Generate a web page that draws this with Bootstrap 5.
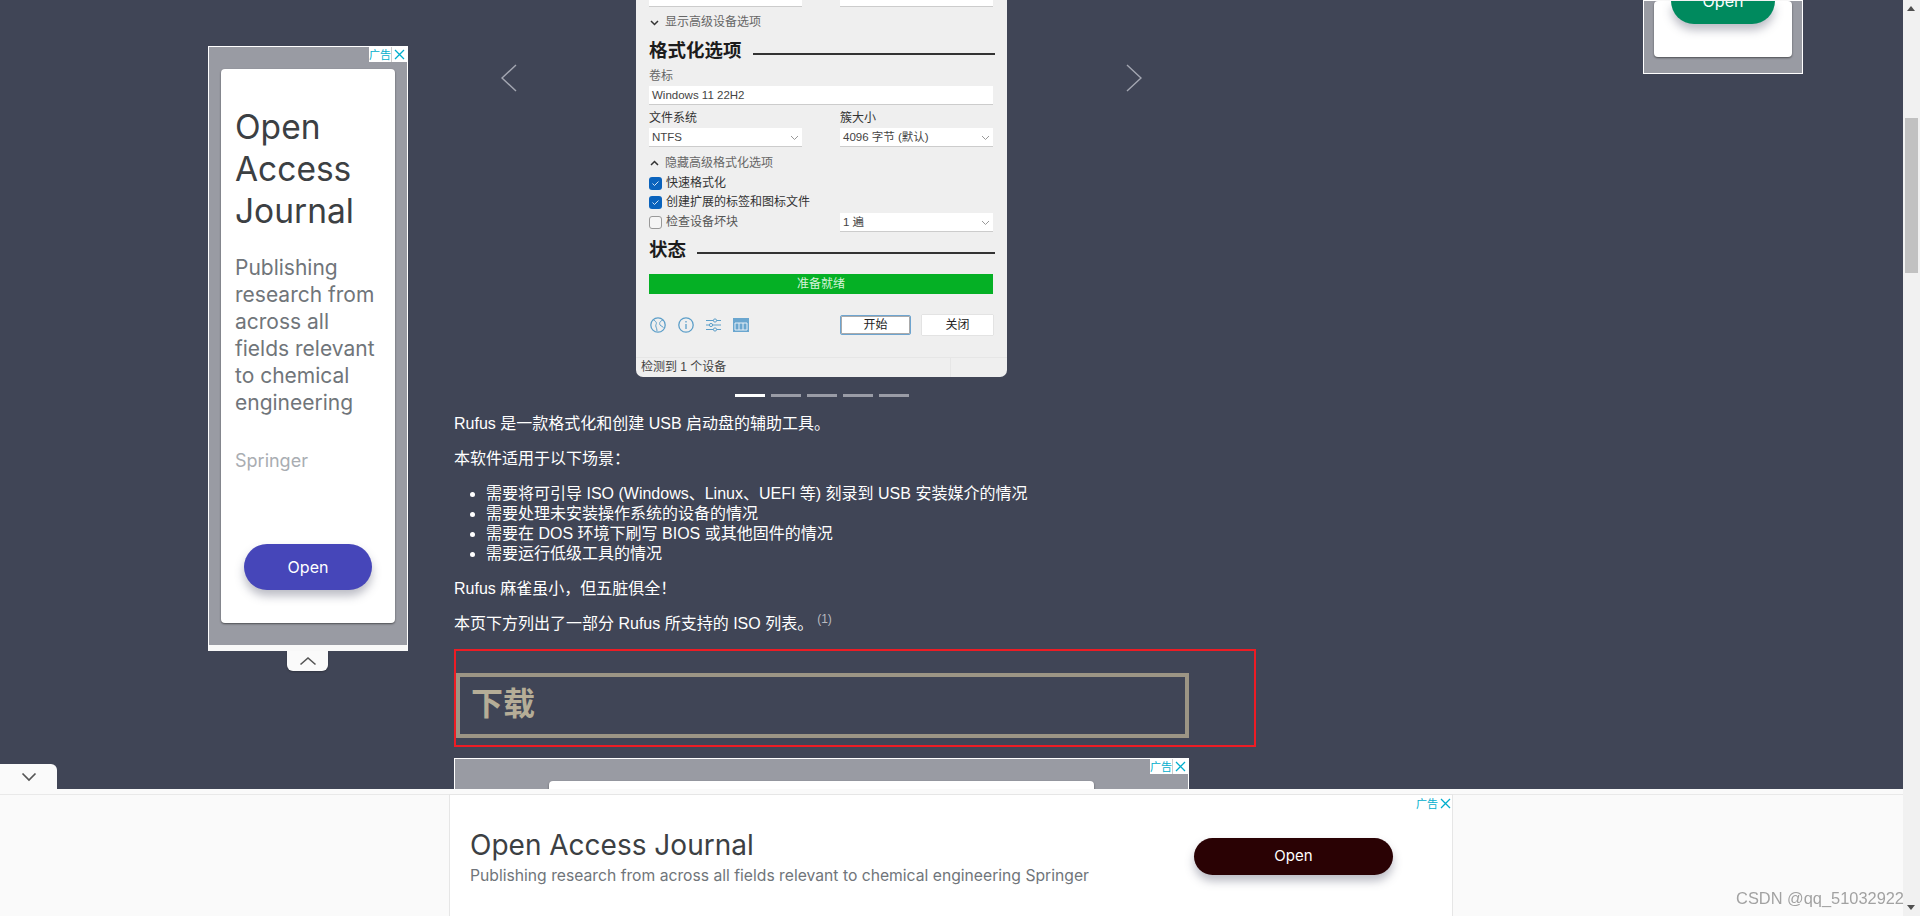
<!DOCTYPE html>
<html lang="en">
<head>
    <meta charset="UTF-8">
    <meta name="viewport" content="width=device-width, initial-scale=1.0">
    <title>Rufus</title>
    <link href="https://cdn.jsdelivr.net/npm/bootstrap@5.3.0/dist/css/bootstrap.min.css" rel="stylesheet">
    <style>
        html, body { height: 916px; overflow: hidden; }
        body {
            background: #404556;
            color: #fff;
            font-family: "Liberation Sans", "Noto Sans CJK SC", sans-serif;
            font-size: 16px;
        }
        .page-area { width: 1903px; height: 916px; overflow: hidden; background: #404556; }

        /* fake browser scrollbar */
        .fake-scroll { width: 17px; height: 916px; background: #f1f1f1; position: relative; }
        .fake-scroll .thumb { position: absolute; left: 2px; right: 2px; top: 118px; height: 155px; background: #c1c1c1; }
        .fake-scroll .up, .fake-scroll .down { position: absolute; left: 4px; width: 0; height: 0; border-left: 4px solid transparent; border-right: 4px solid transparent; }
        .fake-scroll .up { top: 6px; border-bottom: 5px solid #505050; }
        .fake-scroll .down { bottom: 6px; border-top: 5px solid #505050; }

        /* ads */
        .ad-font { font-family: Inter, "Liberation Sans", sans-serif; }
        .ad-frame { background: #999ba3; border: 1px solid #fff; position: relative; }
        .ad-tag { position: absolute; top: 0; right: 0; display: flex; background: #fff; color: #00aecd; height: 15px; font-size: 11px; line-height: 15px; font-family: "Noto Sans CJK SC", sans-serif; }
        .ad-tag span { border-right: 1px solid #ccc; }
        .ad-tag svg { width: 15px; height: 15px; }
        .ad-card { background: #fff; border-radius: 4px; box-shadow: 0 1px 2px rgba(0,0,0,.5); }
        .ad-btn { border-radius: 24px; color: #fff; display: flex; align-items: center; justify-content: center; font-size: 16px; box-shadow: 0 6px 10px rgba(60,64,90,.35); }

        .left-col { width: 454px; padding: 46px 0 0 208px; flex: none; }
        .left-ad { width: 200px; height: 605px; border-bottom: 6px solid #f8f8f8; padding: 22px 12px 21px; }
        .left-ad .ad-card { height: 554px; padding: 37px 10px 0 14px; color: #3c3c3c; }
        .left-ad h4 { font-size: 33.500px; line-height: 42px; font-weight: 400; margin: 0 0 22px; color: #3c4043; }
        .left-ad .ad-desc { font-size: 21px; line-height: 27px; color: #70757a; }
        .left-ad .ad-src { font-size: 18px; color: #a9adb2; margin-top: 31px; }
        .left-ad .ad-btn { width: 128px; height: 46px; background: #4646b9; margin: 70px 0 0 9px; }
        .fold-up { width: 41px; height: 20px; background: #fafafa; border-radius: 0 0 6px 6px; margin-left: 79px; display: flex; align-items: center; justify-content: center; box-shadow: 0 1px 2px rgba(0,0,0,.25); }

        .mid-col { width: 802px; flex: none; }
        .slide-box { width: 735px; height: 377px; position: relative; display: flex; justify-content: center; align-items: flex-end; }
        .slide-arrow { position: absolute; top: 62px; width: 16px; height: 32px; }
        .slide-dots { width: 735px; height: 3px; margin: 17px 0 0; display: flex; justify-content: center; gap: 6px; }
        .slide-dots i { width: 30px; height: 3px; background: #9a9ca6; }
        .slide-dots i.on { background: #fff; }

        /* the rufus window picture */
        .rufus-win { width: 371px; height: 377px; background: #efefef; border-radius: 0 0 7px 7px; color: #333; font-size: 12px; line-height: 14px; display: flex; flex-direction: column; padding: 0 14px 0 13px; position: relative; overflow: hidden; }
        .rufus-sec { font-size: 18.500px; font-weight: 700; line-height: 22px; color: #1c1c1c; display: flex; align-items: center; gap: 11px; }
        .rufus-sec::after { content: ""; flex: 1; height: 2px; background: #333; margin: 5px -2px 0 0; }
        .rufus-field { background: #fff; height: 18px; line-height: 18px; padding: 0 3px; font-size: 11.500px; box-shadow: 0 1px 0 #ccc; display: flex; justify-content: space-between; align-items: center; color: #444; }
        .rufus-half { width: 153px; }
        .rufus-chev { width: 9px; height: 9px; flex: none; }
        .rufus-toggle { margin-left: 1px; gap: 6px; color: #666; }
        .rufus-check { width: 13px; height: 13px; border-radius: 3px; background: #0a63bd; flex: none; display: flex; align-items: center; justify-content: center; }
        .rufus-check.off { background: #f5f5f5; border: 1px solid #999; }
        .rufus-bar { background: #05b025; height: 20px; color: #d6f3da; text-align: center; font-size: 12px; line-height: 20px; }
        .rufus-tools { height: 20px; gap: 12px; padding-left: 1px; }
        .rufus-key { width: 71px; height: 20px; background: #fff; text-align: center; line-height: 20px; font-size: 12px; box-shadow: 0 0 1px #aaa; color: #222; }
        .rufus-key.def { border: 1px solid #6ea4cf; box-shadow: inset 0 0 0 1px #aaa; line-height: 18px; border-radius: 2px; }
        .rufus-foot { margin: 0 -14px 0 -13px; height: 20px; border-top: 1px solid #e6e6e6; display: flex; font-size: 12px; line-height: 18px; padding-left: 5px; color: #444; }
        .rufus-foot b { font-weight: 400; flex: 1; border-right: 1px solid #e6e6e6; }
        .rufus-foot u { width: 56px; }

        .intro-txt { padding-top: 17px; font-size: 16px; line-height: 20px; width: 735px; }
        .intro-txt p { margin: 0 0 15px; }
        .intro-txt ul { margin: 0 0 15px; padding-left: 32px; }
        .intro-txt sup { color: #b9bac0; font-size: 12px; margin-left: 4px; }

        .red-box { border: 2px solid #ed1c24; width: 802px; height: 98px; margin-top: 15px; padding: 22px 0 0 0; }
        .dl-head { width: 733px; height: 65px; border: 4px solid #9c9585; color: #b5ad97; font-size: 32px; font-weight: 700; line-height: 54px; padding-left: 11px; margin: 0; }
        .low-ad { width: 735px; height: 60px; margin-top: 11px; padding: 22px 0 0 94px; }
        .low-ad .ad-card { width: 545px; height: 40px; }

        .right-col { padding-left: 387px; }
        .right-ad { width: 160px; height: 74px; padding: 0 10px; }
        .right-ad .ad-card { width: 138px; height: 56px; padding: 0 0 0 17px; }
        .right-ad .ad-btn { width: 104px; height: 23px; background: #008a5e; border-radius: 0 0 24px 24px; align-items: flex-start; line-height: 18px; overflow: hidden; }
        .right-ad .ad-btn span { margin-top: -9px; }

        /* bottom sticky ad */
        .stick-bar { position: fixed; left: 0; bottom: 0; width: 1903px; height: 127px; background: linear-gradient(#fafafa 5px, #e9e9e9 5px, #e9e9e9 6px, #fafafa 6px); }
        .stick-tab { position: absolute; left: 0; top: -25px; width: 57px; height: 25px; background: #fafafa; border-radius: 0 6px 0 0; display: flex; align-items: center; justify-content: center; }
        .stick-inner { margin: 5px 0 0 449px; width: 1004px; height: 122px; background: #fff; border: 1px solid #e6e6e6; border-bottom: 0; padding: 35px 59px 0 20px; position: relative; }
        .stick-inner h5 { font-size: 28px; line-height: 30px; font-weight: 400; margin: 0 0 5px; color: #3c4043; }
        .stick-inner .ad-desc { font-size: 15.700px; line-height: 22px; color: #70757a; }
        .stick-inner .ad-btn { width: 199px; height: 37px; background: #2a0204; font-size: 15px; margin-top: 8px; }
        .stick-tag { position: absolute; right: 0; top: 1px; color: #00aecd; font-size: 11px; line-height: 15px; display: flex; align-items: center; gap: 1px; font-family: "Noto Sans CJK SC", sans-serif; }
        .watermark { position: absolute; right: -1px; bottom: 8px; color: #8c8c8c; font-size: 16.400px; line-height: 20px; opacity: .8; }
    </style>
</head>
<body>
<div class="d-flex">
    <div class="page-area d-flex">

        <!-- left ad -->
        <div class="left-col">
            <div class="ad-frame left-ad ad-font">
                <div class="ad-tag"><span>广告</span><svg viewBox="0 0 15 15"><path d="M3 3l9 9M12 3l-9 9" stroke="#00aecd" stroke-width="1.3" fill="none"/></svg></div>
                <div class="ad-card">
                    <h4>Open Access Journal</h4>
                    <div class="ad-desc">Publishing research from across all fields relevant to chemical engineering</div>
                    <div class="ad-src">Springer</div>
                    <div class="ad-btn">Open</div>
                </div>
            </div>
            <div class="fold-up"><svg width="18" height="10" viewBox="0 0 18 10"><path d="M1.5 8.5L9 2l7.5 6.5" stroke="#555" stroke-width="1.6" fill="none"/></svg></div>
        </div>

        <!-- main column -->
        <div class="mid-col">
            <div class="slide-box">
                <svg class="slide-arrow" style="left:47px" viewBox="0 0 16 32"><path d="M15 3L1 16l14 13" stroke="#a4a7b2" stroke-width="1.4" fill="none"/></svg>
                <svg class="slide-arrow" style="right:47px" viewBox="0 0 16 32"><path d="M1 3l14 13L1 29" stroke="#a4a7b2" stroke-width="1.4" fill="none"/></svg>

                <div class="rufus-win">
                    <div class="d-flex justify-content-between">
                        <div class="rufus-field rufus-half" style="height:6px"></div>
                        <div class="rufus-field rufus-half" style="height:6px"></div>
                    </div>
                    <div class="d-flex align-items-center rufus-toggle" style="margin-top:9px">
                        <svg class="rufus-chev" viewBox="0 0 9 9"><path d="M1 3l3.5 3.5L8 3" stroke="#333" stroke-width="1.5" fill="none"/></svg>显示高级设备选项
                    </div>
                    <div class="rufus-sec" style="margin-top:11px">格式化选项</div>
                    <div style="margin-top:7px;color:#666">卷标</div>
                    <div class="rufus-field" style="margin-top:3px">Windows 11 22H2</div>
                    <div class="d-flex justify-content-between" style="margin-top:7px">
                        <div class="rufus-half">文件系统</div>
                        <div class="rufus-half">簇大小</div>
                    </div>
                    <div class="d-flex justify-content-between" style="margin-top:3px">
                        <div class="rufus-field rufus-half">NTFS <svg class="rufus-chev" viewBox="0 0 9 9"><path d="M1 3l3.5 3.5L8 3" stroke="#999" fill="none"/></svg></div>
                        <div class="rufus-field rufus-half">4096 字节 (默认) <svg class="rufus-chev" viewBox="0 0 9 9"><path d="M1 3l3.5 3.5L8 3" stroke="#999" fill="none"/></svg></div>
                    </div>
                    <div class="d-flex align-items-center rufus-toggle" style="margin-top:10px">
                        <svg class="rufus-chev" viewBox="0 0 9 9"><path d="M1 6l3.5-3.5L8 6" stroke="#333" stroke-width="1.5" fill="none"/></svg>隐藏高级格式化选项
                    </div>
                    <div class="d-flex align-items-center gap-1" style="margin-top:6px"><span class="rufus-check"><svg width="9" height="9" viewBox="0 0 9 9"><path d="M1.5 4.5l2 2 4-4" stroke="#cfe2f5" fill="none"/></svg></span>快速格式化</div>
                    <div class="d-flex align-items-center gap-1" style="margin-top:5px"><span class="rufus-check"><svg width="9" height="9" viewBox="0 0 9 9"><path d="M1.5 4.5l2 2 4-4" stroke="#cfe2f5" fill="none"/></svg></span>创建扩展的标签和图标文件</div>
                    <div class="d-flex justify-content-between align-items-center" style="margin-top:4px">
                        <div class="d-flex align-items-center gap-1" style="color:#555"><span class="rufus-check off"></span>检查设备坏块</div>
                        <div class="rufus-field rufus-half">1 遍 <svg class="rufus-chev" viewBox="0 0 9 9"><path d="M1 3l3.5 3.5L8 3" stroke="#999" fill="none"/></svg></div>
                    </div>
                    <div class="rufus-sec" style="margin-top:8px">状态</div>
                    <div class="rufus-bar" style="margin-top:13px">准备就绪</div>
                    <div class="d-flex align-items-center rufus-tools" style="margin-top:21px">
                        <svg width="16" height="16" viewBox="0 0 16 16"><circle cx="8" cy="8" r="7.200" fill="none" stroke="#5d9fc9" stroke-width="1.300"/><path d="M3 2.500c3 2 4 3 3 5s1 3 1 6.500M13 3c-3 1-4 3-3 5l3.500 2.500" fill="none" stroke="#5d9fc9"/></svg>
                        <svg width="16" height="16" viewBox="0 0 16 16"><circle cx="8" cy="8" r="7.200" fill="none" stroke="#5d9fc9" stroke-width="1.300"/><path d="M8 7v5M8 4v1.500" stroke="#5d9fc9" stroke-width="1.300"/></svg>
                        <svg width="15" height="14" viewBox="0 0 15 14"><path d="M0 2.500h15M0 7h15M0 11.500h15" stroke="#5d9fc9"/><circle cx="9" cy="2.500" r="1.600" fill="#efefef" stroke="#5d9fc9"/><circle cx="5" cy="7" r="1.600" fill="#efefef" stroke="#5d9fc9"/><circle cx="9" cy="11.500" r="1.600" fill="#efefef" stroke="#5d9fc9"/></svg>
                        <svg width="16" height="14" viewBox="0 0 16 14"><rect width="16" height="14" fill="#6aa6cf"/><path d="M2 5h12v7H2zM6 5v7M10 5v7" fill="none" stroke="#e6eff6"/></svg>
                        <div class="ms-auto d-flex" style="gap:11px">
                            <div class="rufus-key def">开始</div>
                            <div class="rufus-key">关闭</div>
                        </div>
                    </div>
                    <div class="rufus-foot mt-auto"><b>检测到 1 个设备</b><u></u></div>
                </div>
            </div>
            <div class="slide-dots"><i class="on"></i><i></i><i></i><i></i><i></i></div>

            <div class="intro-txt">
                <p>Rufus 是一款格式化和创建 USB 启动盘的辅助工具。</p>
                <p>本软件适用于以下场景：</p>
                <ul>
                    <li>需要将可引导 ISO (Windows、Linux、UEFI 等) 刻录到 USB 安装媒介的情况</li>
                    <li>需要处理未安装操作系统的设备的情况</li>
                    <li>需要在 DOS 环境下刷写 BIOS 或其他固件的情况</li>
                    <li>需要运行低级工具的情况</li>
                </ul>
                <p>Rufus 麻雀虽小，但五脏俱全！</p>
                <p class="mb-0">本页下方列出了一部分 Rufus 所支持的 ISO 列表。<sup>(1)</sup></p>
            </div>

            <div class="red-box">
                <h2 class="dl-head">下载</h2>
            </div>

            <div class="ad-frame low-ad">
                <div class="ad-tag"><span>广告</span><svg viewBox="0 0 15 15"><path d="M3 3l9 9M12 3l-9 9" stroke="#00aecd" stroke-width="1.3" fill="none"/></svg></div>
                <div class="ad-card"></div>
            </div>
        </div>

        <!-- right ad, mostly scrolled off -->
        <div class="right-col">
            <div class="ad-frame right-ad ad-font">
                <div class="ad-card"><div class="ad-btn"><span>Open</span></div></div>
            </div>
        </div>
    </div>

    <div class="fake-scroll"><span class="up"></span><span class="thumb"></span><span class="down"></span></div>
</div>

<!-- sticky bottom ad -->
<div class="stick-bar">
    <div class="stick-tab"><svg width="16" height="10" viewBox="0 0 16 10"><path d="M1.500 1.500L8 8l6.500-6.500" stroke="#555" stroke-width="1.700" fill="none"/></svg></div>
    <div class="stick-inner ad-font d-flex justify-content-between">
        <div>
            <h5>Open Access Journal</h5>
            <div class="ad-desc">Publishing research from across all fields relevant to chemical engineering Springer</div>
        </div>
        <div class="ad-btn">Open</div>
        <div class="stick-tag">广告<svg width="13" height="13" viewBox="0 0 13 13"><path d="M2 2l9 9M11 2l-9 9" stroke="#00aecd" stroke-width="1.300" fill="none"/></svg></div>
    </div>
    <div class="watermark">CSDN @qq_51032922</div>
</div>

<script src="https://cdn.jsdelivr.net/npm/bootstrap@5.3.0/dist/js/bootstrap.bundle.min.js"></script>
</body>
</html>
